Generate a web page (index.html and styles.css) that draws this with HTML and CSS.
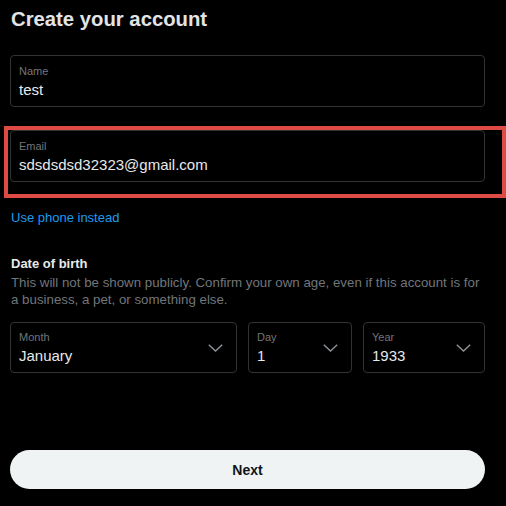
FILE: index.html
```html
<!DOCTYPE html>
<html lang="en">
<head>
  <meta charset="UTF-8">
  <meta name="viewport" content="width=device-width, initial-scale=1.0">
  <title>Create your account</title>
  <link rel="stylesheet" href="styles.css">
</head>
<body>
  <div class="container">
    <h1>Create your account</h1>

    <div class="field field-name">
      <div class="field-label">Name</div>
      <div class="field-value">test</div>
    </div>

    <div class="highlight">
      <div class="field">
        <div class="field-label">Email</div>
        <div class="field-value">sdsdsdsd32323@gmail.com</div>
      </div>
    </div>

    <a class="link" href="#">Use phone instead</a>

    <div class="dob-title">Date of birth</div>
    <div class="dob-text">This will not be shown publicly. Confirm your own age, even if this account is for a business, a pet, or something else.</div>

    <div class="dob-row">
      <div class="field select">
        <div>
          <div class="field-label">Month</div>
          <div class="field-value">January</div>
        </div>
        <svg class="chevron" viewBox="0 0 15 8"><polyline points="0.8,0.8 7.5,7 14.2,0.8"/></svg>
      </div>
      <div class="field select">
        <div>
          <div class="field-label">Day</div>
          <div class="field-value">1</div>
        </div>
        <svg class="chevron" viewBox="0 0 15 8"><polyline points="0.8,0.8 7.5,7 14.2,0.8"/></svg>
      </div>
      <div class="field select">
        <div>
          <div class="field-label">Year</div>
          <div class="field-value">1933</div>
        </div>
        <svg class="chevron" viewBox="0 0 15 8"><polyline points="0.8,0.8 7.5,7 14.2,0.8"/></svg>
      </div>
    </div>

    <button class="next">Next</button>
  </div>
</body>
</html>
```

FILE: styles.css
```css
body {
  margin: 0;
  background: #000;
  color: #e7e9ea;
  font-family: 'Liberation Sans', Arial, sans-serif;
  overflow: hidden;
}

.container {
  width: 475px;
  padding: 6px 0 0 10px;
}

h1 {
  margin: 0 0 0 1px;
  font-size: 20.3px;
  line-height: 26px;
  font-weight: bold;
  color: #e3e4e5;
}

.field {
  box-sizing: border-box;
  height: 52px;
  border: 1px solid #2f3336;
  border-radius: 4px;
  padding: 8px 8px 0 8px;
}

.field-name {
  margin-top: 23px;
}

.field-label {
  font-size: 11px;
  line-height: 14px;
  color: #71767b;
  margin-bottom: 2px;
}

.field-value {
  font-size: 15px;
  line-height: 20px;
  color: #e7e9ea;
}

/* red annotation box around the email field */
.highlight {
  margin: 19px -21px 0 -6px;
  border: 4px solid #de4a44;
  padding: 0 17px 12px 2px;
}

.link {
  display: block;
  margin: 11px 0 0 1px;
  font-size: 13px;
  line-height: 17px;
  color: #1d9bf0;
  text-decoration: none;
}

.dob-title {
  margin: 29px 0 2px 1px;
  font-size: 13px;
  line-height: 17px;
  font-weight: bold;
}

.dob-text {
  margin-left: 1px;
  font-size: 13.3px;
  line-height: 17px;
  color: #71767b;
}

.dob-row {
  display: grid;
  grid-template-columns: 227px 104px 1fr;
  column-gap: 11px;
  margin-top: 14px;
}

.select {
  height: 51px;
  display: flex;
  justify-content: space-between;
  align-items: center;
  padding: 0 13px 0 8px;
}

.select .field-label {
  margin-top: 1px;
}

.chevron {
  width: 15px;
  height: 8px;
  fill: none;
  stroke: #8b9096;
  stroke-width: 1.5;
}

.next {
  display: block;
  width: 100%;
  height: 39px;
  margin-top: 77px;
  border: none;
  border-radius: 20px;
  background: #eff3f4;
  color: #0f1419;
  font-family: inherit;
  font-size: 14px;
  font-weight: bold;
}
```
